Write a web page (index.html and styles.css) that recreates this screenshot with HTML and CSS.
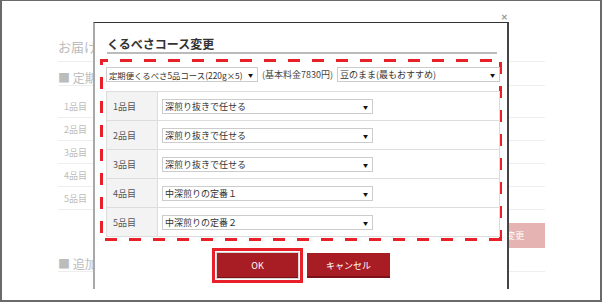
FILE: index.html
```html
<!DOCTYPE html>
<html>
<head>
  <meta charset="utf-8">
  <link rel="stylesheet" href="styles.css">
</head>
<body>
<div class="screen">

  <!-- Pagina de fondo -->
  <div class="page">
    <h2 class="page-title">お届け内容</h2>
    <div class="section-title">■ 定期便の内容</div>
    <table class="item-table">
      <tr><td>1品目</td><td></td></tr>
      <tr><td>2品目</td><td></td></tr>
      <tr><td>3品目</td><td></td></tr>
      <tr><td>4品目</td><td></td></tr>
      <tr><td>5品目</td><td></td></tr>
    </table>
    <div class="page-actions">
      <button class="change-button">コース変更</button>
    </div>
    <div class="section-title">■ 追加注文</div>
  </div>

  <!-- Ventana modal -->
  <div class="modal">
    <span class="modal-close">✕</span>
    <h3 class="modal-title">くるべさコース変更</h3>

    <div class="dashed-box">
      <div class="course-row">
        <div class="select course-select">定期便くるべさ5品コース(220g×5)<span class="arrow">▼</span></div>
        <span class="price">(基本料金7830円)</span>
        <div class="select grind-select">豆のまま(最もおすすめ)<span class="arrow">▼</span></div>
      </div>

      <table class="item-select-table">
        <tr>
          <td class="item-label">1品目</td>
          <td><div class="select item-select">深煎り抜きで任せる<span class="arrow">▼</span></div></td>
        </tr>
        <tr>
          <td class="item-label">2品目</td>
          <td><div class="select item-select">深煎り抜きで任せる<span class="arrow">▼</span></div></td>
        </tr>
        <tr>
          <td class="item-label">3品目</td>
          <td><div class="select item-select">深煎り抜きで任せる<span class="arrow">▼</span></div></td>
        </tr>
        <tr>
          <td class="item-label">4品目</td>
          <td><div class="select item-select">中深煎りの定番１<span class="arrow">▼</span></div></td>
        </tr>
        <tr>
          <td class="item-label">5品目</td>
          <td><div class="select item-select">中深煎りの定番２<span class="arrow">▼</span></div></td>
        </tr>
      </table>
    </div>

    <div class="modal-buttons">
      <div class="solid-box">
        <button class="red-button ok-button">OK</button>
      </div>
      <button class="red-button cancel-button">キャンセル</button>
    </div>
  </div>

</div>
</body>
</html>
```

FILE: styles.css
```css
body {
  margin: 0;
  font-family: "Noto Sans CJK JP", "Liberation Sans", sans-serif;
}

.screen {
  position: relative;
  width: 602px;
  height: 302px;
  box-sizing: border-box;
  border: 2px solid #6a6a6a;
  border-top-width: 1px;
  background-color: #fff;
  overflow: hidden;
}

/* Pagina de fondo (gris claro) */
.page {
  width: 487px;
  margin-left: 56px;
  padding-top: 37px;
  color: #bcbcbc;
}

.page-title {
  margin: 0;
  font-size: 13px;
  font-weight: normal;
  line-height: 18px;
  padding-bottom: 5px;
  border-bottom: 1px solid #eee;
}

.section-title {
  font-size: 12px;
  line-height: 16px;
  padding-top: 8px;
  height: 15px;
  border-bottom: 1px solid #eee;
}

.item-table {
  width: 100%;
  margin-top: 9px;
  border-collapse: collapse;
}

.item-table td {
  height: 22px;
  padding: 0 0 0 6px;
  font-size: 9px;
  border-bottom: 1px solid #eee;
}

.page-actions {
  display: flex;
  justify-content: flex-end;
  margin-top: 13px;
}

.change-button {
  width: 86px;
  height: 25px;
  border: none;
  background-color: #e6b3b3;
  color: #fff;
  font-family: inherit;
  font-size: 9px;
}

/* Ventana modal */
.modal {
  position: absolute;
  left: 91px;
  top: 21px;
  width: 402px;
  height: 266px;
  padding: 0 5px;
  background-color: #fff;
  border-top: 1px solid #333;
  border-left: 2px solid #a8a8a8;
  border-right: 2px solid #444;
}

.modal-close {
  position: absolute;
  right: -1px;
  top: -12px;
  font-size: 8px;
  font-weight: bold;
  color: #999;
}

.modal-title {
  margin: 0 5px 0 7px;
  padding-top: 12px;
  font-size: 12px;
  line-height: 17px;
  font-weight: bold;
  color: #333;
  border-bottom: 2px solid #bbb;
}

/* Recuadro rojo discontinuo */
.dashed-box {
  margin-top: 5px;
  padding: 8px 2px 4px 6px;
  background:
    repeating-linear-gradient(90deg, #e8202a 0 8px, transparent 8px 20px, #e8202a 20px 24px) top left / 100% 3px no-repeat,
    repeating-linear-gradient(90deg, transparent 0 5px, #e8202a 5px 17px, transparent 17px 24px) bottom left / 100% 3px no-repeat,
    repeating-linear-gradient(180deg, #e8202a 0 6px, transparent 6px 18px, #e8202a 18px 24px) top left / 3px 100% no-repeat,
    repeating-linear-gradient(180deg, transparent 0 3px, #e8202a 3px 15px, transparent 15px 24px) top right / 3px 100% no-repeat;
}

.course-row {
  display: flex;
  align-items: center;
  gap: 4px;
  font-size: 9px;
  color: #444;
}

.price {
  white-space: nowrap;
}

.select {
  display: flex;
  align-items: center;
  height: 15px;
  box-sizing: border-box;
  padding: 0 4px 0 2px;
  border: 1px solid #ccc;
  background-color: #fff;
  font-size: 9px;
  color: #333;
  white-space: nowrap;
  overflow: hidden;
}

.select .arrow {
  margin-left: auto;
  padding-left: 3px;
  font-size: 5px;
  color: #111;
}

.course-select {
  flex: none;
  width: 152px;
  font-size: 8.4px;
}

.grind-select {
  flex: 1;
}

.item-select-table {
  width: 100%;
  margin-top: 9px;
  border-collapse: collapse;
  border: 1px solid #ddd;
}

.item-select-table td {
  height: 28px;
  padding: 0 0 0 4px;
  border-bottom: 1px solid #ddd;
}

.item-select-table td.item-label {
  width: 44px;
  padding-left: 6px;
  background-color: #f3f3f3;
  border-right: 1px solid #ddd;
  font-size: 9px;
  color: #555;
}

.item-select {
  width: 211px;
}

/* Botones */
.modal-buttons {
  display: flex;
  justify-content: center;
  align-items: center;
  gap: 4px;
  margin-top: 7px;
}

.solid-box {
  border: 3px solid #e8202a;
  padding: 1px;
  display: flex;
}

.red-button {
  width: 83px;
  border: none;
  color: #fff;
  background-color: #a81d23;
  font-family: inherit;
  font-size: 9px;
  padding: 0;
}

.ok-button {
  height: 27px;
  box-shadow: inset 0 0 0 1px #d8d8d8, inset 0 -2px 0 #7c1218;
}

.cancel-button {
  height: 25px;
  box-shadow: inset 0 -2px 0 #7c1218;
}
```
